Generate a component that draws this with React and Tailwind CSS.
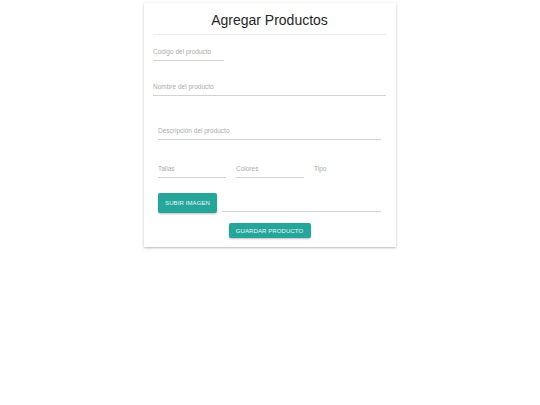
export default function App() {
  const label = "pt-px text-[6.5px] leading-[8px] text-[#acacac]"
  const line = "pb-[4px] border-b border-[#d2d2d2]"
  const btn = "rounded-[2px] bg-[#26a69a] pt-px text-[6px] font-normal uppercase tracking-[0.1px] text-white/90 shadow-[0_1px_2px_rgba(0,0,0,0.25)]"

  return (
    <div className="min-h-[405px] bg-white pt-[3px] font-['Liberation_Sans',Arial,sans-serif]">
      <div className="mx-auto w-[252px] bg-white pl-[9px] pr-[10px] pb-[9px] shadow-[0_1px_3px_rgba(0,0,0,0.2),0_1px_1px_rgba(0,0,0,0.08)]">
        <div className="flex h-[32px] items-center justify-center border-b border-[#ebebeb] pt-[2px]">
          <h1 className="text-[14px] leading-[20px] text-[#262626]">Agregar Productos</h1>
        </div>

        <div className={`mt-[12px] w-[71px] ${line}`}>
          <p className={label}>Código del producto</p>
        </div>

        <div className={`mt-[21px] ${line}`}>
          <p className={label}>Nombre del producto</p>
        </div>

        <div className="px-[5px]">
          <div className={`mt-[30px] ${line}`}>
            <p className={label}>Descripción del producto</p>
          </div>

          <div className="mt-[24px] flex gap-[10px]">
            <div className={`w-[68px] ${line}`}>
              <p className={label}>Tallas</p>
            </div>
            <div className={`w-[68px] ${line}`}>
              <p className={label}>Colores</p>
            </div>
            <div className="pb-[4px]">
              <p className={label}>Tipo</p>
            </div>
          </div>

          <div className="mt-[15px] flex items-end gap-[5px]">
            <button className={`h-[20px] w-[59px] ${btn}`}>Subir imagen</button>
            <div className="mb-px flex-1 border-b border-[#d2d2d2]" />
          </div>
        </div>

        <div className="mt-[10px] flex justify-center">
          <button className={`h-[15px] w-[82px] ${btn}`}>Guardar producto</button>
        </div>
      </div>
    </div>
  )
}
